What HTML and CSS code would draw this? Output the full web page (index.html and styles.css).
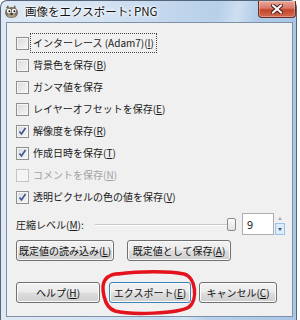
FILE: index.html
```html
<!DOCTYPE html>
<html lang="ja">
<head>
  <meta charset="UTF-8">
  <title>画像をエクスポート: PNG</title>
  <link rel="stylesheet" href="styles.css">
</head>
<body>
  <div class="window">
    <div class="titlebar">
      <svg class="app-icon" width="15" height="14" viewBox="0 0 15 14">
        <path d="M2 3 L4 0 L5 3 Z M9 3 L11 0 L12 4 Z" fill="#6b6152"/>
        <ellipse cx="7.5" cy="7.5" rx="6.5" ry="5.5" fill="#7a6e5c"/>
        <ellipse cx="7.5" cy="10" rx="4" ry="2.5" fill="#a89b84"/>
        <circle cx="5" cy="6" r="2.2" fill="#fff"/>
        <circle cx="10" cy="6" r="2.2" fill="#fff"/>
        <circle cx="5.4" cy="6.2" r="1" fill="#111"/>
        <circle cx="10.4" cy="6.2" r="1" fill="#111"/>
        <ellipse cx="7.5" cy="9" rx="1.3" ry="0.9" fill="#2a2620"/>
      </svg>
      <span class="title">画像をエクスポート: PNG</span>
      <div class="close">
        <svg width="12" height="10" viewBox="0 0 12 10">
          <path d="M2 1.5 L10 8.5 M10 1.5 L2 8.5" stroke="#4a2018" stroke-width="4" stroke-linecap="square"/>
          <path d="M2 1.5 L10 8.5 M10 1.5 L2 8.5" stroke="#fff" stroke-width="2" stroke-linecap="square"/>
        </svg>
      </div>
    </div>

    <div class="client">
      <label class="check"><span class="box"></span><span class="text focus">インターレース (Adam7)(<u>I</u>)</span></label>
      <label class="check"><span class="box"></span><span class="text">背景色を保存(<u>B</u>)</span></label>
      <label class="check"><span class="box"></span><span class="text">ガンマ値を保存</span></label>
      <label class="check"><span class="box"></span><span class="text">レイヤーオフセットを保存(<u>E</u>)</span></label>
      <label class="check on"><span class="box"><svg width="11" height="11" viewBox="0 0 11 11"><path d="M2.5 5.5 L4.5 8 L8.5 2" fill="none" stroke="#3d5490" stroke-width="1.6"/></svg></span><span class="text">解像度を保存(<u>R</u>)</span></label>
      <label class="check on"><span class="box"><svg width="11" height="11" viewBox="0 0 11 11"><path d="M2.5 5.5 L4.5 8 L8.5 2" fill="none" stroke="#3d5490" stroke-width="1.6"/></svg></span><span class="text">作成日時を保存(<u>T</u>)</span></label>
      <label class="check off"><span class="box"></span><span class="text">コメントを保存(<u>N</u>)</span></label>
      <label class="check on"><span class="box"><svg width="11" height="11" viewBox="0 0 11 11"><path d="M2.5 5.5 L4.5 8 L8.5 2" fill="none" stroke="#3d5490" stroke-width="1.6"/></svg></span><span class="text">透明ピクセルの色の値を保存(<u>V</u>)</span></label>

      <div class="level-row">
        <span class="level-label">圧縮レベル(<u>M</u>):</span>
        <div class="slider"><span class="thumb"></span></div>
        <div class="spin">
          <span class="spin-entry">9</span>
          <span class="spin-btns">
            <span class="spin-up"></span>
            <span class="spin-down"></span>
          </span>
        </div>
      </div>

      <div class="preset-row">
        <span class="btn load">既定値の読み込み(<u>L</u>)</span>
        <span class="btn save">既定値として保存(<u>A</u>)</span>
      </div>

      <div class="action-row">
        <span class="btn help">ヘルプ(<u>H</u>)</span>
        <span class="btn export">エクスポート(<u>E</u>)</span>
        <span class="btn cancel">キャンセル(<u>C</u>)</span>
      </div>
    </div>
  </div>

  <svg class="mark" width="300" height="320" viewBox="0 0 300 320">
    <path d="M118 274 C140 271, 170 271, 184 274 C196 277, 198 300, 189 307 C178 314, 130 315, 115 311 C103 307, 101 286, 105 280 C108 275, 113 274, 122 273.5" fill="none" stroke="#e3121c" stroke-width="3.5" stroke-linecap="round"/>
  </svg>
</body>
</html>
```

FILE: styles.css
```css
* {
  box-sizing: border-box;
}

body {
  margin: 0;
  background: #ffffff;
  font-family: "Noto Sans CJK JP", "Noto Sans", sans-serif;
  font-size: 10px;
  color: #1a1a1a;
}

u {text-decoration: underline; text-underline-offset: 1px}

/* window frame */
.window {
  width: 297px;
  height: 320px;
  display: flex;
  flex-direction: column;
  padding: 0 3px 3px 5px;
  border: 1px solid #55667a;
  border-bottom: none;
  border-radius: 7px 7px 0 0;
  background:
    linear-gradient(100deg, rgba(255,255,255,0) 62%, rgba(255,255,255,.35) 68%, rgba(255,255,255,0) 74%),
    linear-gradient(to right, #dfe9f5 0%, #d3e2f2 35%, #bcd3eb 65%, #a9c6e6 100%);
}

.titlebar {
  height: 21px;
  display: flex;
  align-items: flex-start;
}
.app-icon {
  margin: 4px 0 0 -2px;
}
.title {
  margin: 3px 0 0 6px;
  font-size: 11.5px;
  line-height: 14px;
  color: #111;
  text-shadow: 0 0 5px #fff, 0 0 3px #fff, 0 0 2px #fff;
}
.close {
  margin-left: auto;
  margin-right: -3px;
  width: 38px;
  height: 17px;
  display: flex;
  align-items: center;
  justify-content: center;
  border: 1px solid #6b2c22;
  border-top: none;
  border-radius: 0 0 4px 4px;
  background: linear-gradient(#e8a999 0%, #d9776a 45%, #c4452c 55%, #d36a4e 100%);
  box-shadow: inset 0 0 0 1px rgba(255,255,255,.3);
}

/* dialog body */
.client {
  flex: 1;
  display: flex;
  flex-direction: column;
  padding: 9px 7px 0 9px;
  border: 1px solid #7f91a8;
  background: #f0f0f0;
}

.check {
  display: flex;
  align-items: center;
  height: 22px;
}
.box {
  width: 13px;
  height: 13px;
  display: flex;
  align-items: center;
  justify-content: center;
  border: 1px solid #8e8f8f;
  background: linear-gradient(135deg, #d8d9dc, #f7f7f7);
  box-shadow: inset 0 0 0 1px #f6f6f6;
}
.text {
  margin-left: 2px;
  padding: 1px 2px;
  line-height: 16px;
}
.focus {outline: 1px dotted #444}
.off .box {
  border-color: #c4c4c4;
  background: #f4f4f4;
}
.off .text {color: #a2a2a2}

/* compression level */
.level-row {
  display: flex;
  align-items: center;
  height: 22px;
  margin-top: 5px;
}
.slider {
  flex: 1;
  height: 15px;
  margin: 0 6px 0 11px;
  display: flex;
  justify-content: flex-end;
  align-items: center;
  background: linear-gradient(transparent 7px, #c8c8c8 7px, #c8c8c8 8px, #ffffff 8px, #ffffff 9px, transparent 9px);
}
.thumb {
  width: 9px;
  height: 13px;
  border: 1px solid #8a8a8a;
  border-radius: 2px;
  background: linear-gradient(#fbfbfb, #e2e2e2);
}
.spin {
  display: flex;
  height: 22px;
}
.spin-entry {
  width: 32px;
  border: 1px solid #abadb3;
  background: #fff;
  padding-left: 4px;
  font-size: 11px;
  line-height: 20px;
}
.spin-btns {
  width: 10px;
  margin-left: 1px;
  display: flex;
  flex-direction: column;
}
.spin-up, .spin-down {
  flex: 1;
  display: flex;
  align-items: center;
  justify-content: center;
}
.spin-up::after {
  content: '';
  border: 2.5px solid transparent;
  border-bottom: 3px solid #a8a8a8;
  border-top: none;
}
.spin-down {
  background: #dcecfb;
  border: 1px solid #9cc2e6;
}
.spin-down::after {
  content: '';
  border: 2.5px solid transparent;
  border-top: 3px solid #3d5a8a;
  border-bottom: none;
}

/* buttons */
.btn {
  height: 21px;
  display: flex;
  align-items: center;
  justify-content: center;
  border: 1px solid #707070;
  border-radius: 3px;
  background: linear-gradient(#f2f2f2 0%, #ebebeb 48%, #dddddd 52%, #cfcfcf 100%);
  box-shadow: inset 0 0 0 1px #fbfbfb;
  color: #111;
}
.preset-row {
  display: flex;
  gap: 13px;
  margin-top: 5px;
}
.load {width: 98px}
.save {width: 104px}

.action-row {
  display: flex;
  margin-top: auto;
  margin-bottom: 13px;
}
.help {width: 84px}
.export {width: 82px; margin-left: 9px; border-color: #3c7fb1}
.cancel {width: 78px; margin-left: 8px}

/* red marker ring drawn over the dialog */
.mark {
  position: absolute;
  left: 0;
  top: 0;
  pointer-events: none;
}
```
